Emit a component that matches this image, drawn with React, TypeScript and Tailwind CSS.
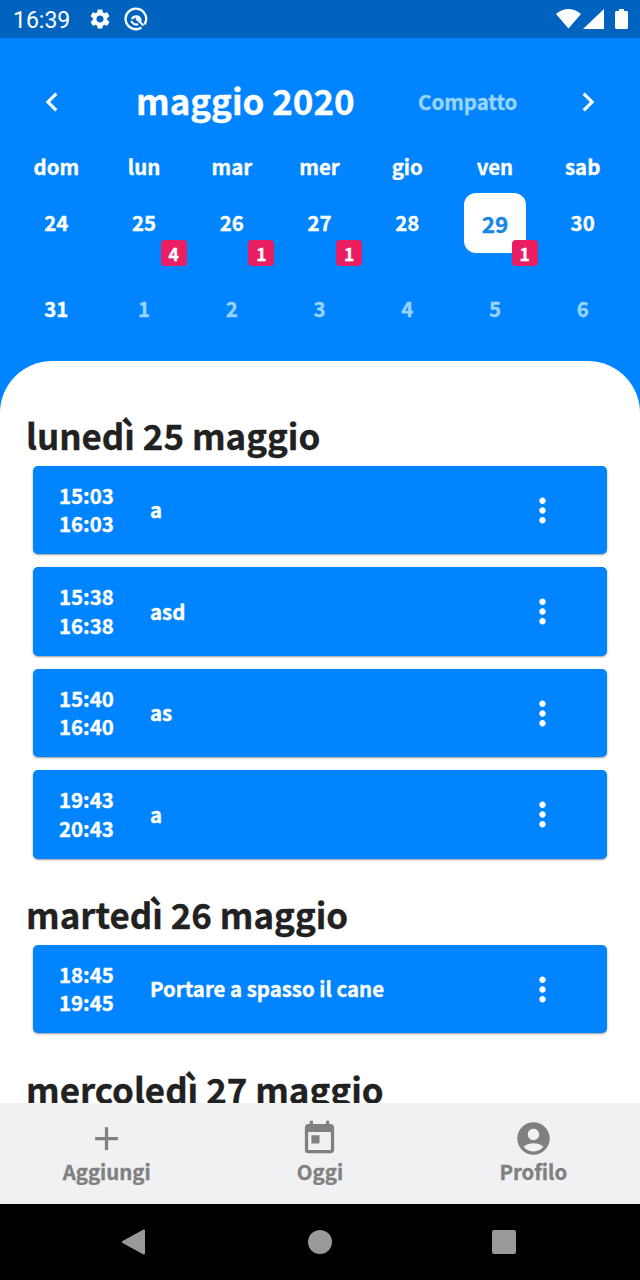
import React from "react";
import { MdSettings, MdAccountCircle, MdMoreVert, MdAdd, MdToday, MdChevronLeft, MdChevronRight } from "react-icons/md";

type Day = { n: number; badge?: number; selected?: boolean; muted?: boolean };
type Item = { start: string; end: string; title: string };

const weekdays = ["dom", "lun", "mar", "mer", "gio", "ven", "sab"];
const weeks: Day[][] = [
  [{ n: 24 }, { n: 25, badge: 4 }, { n: 26, badge: 1 }, { n: 27, badge: 1 }, { n: 28 }, { n: 29, badge: 1, selected: true }, { n: 30 }],
  [{ n: 31 }, { n: 1, muted: true }, { n: 2, muted: true }, { n: 3, muted: true }, { n: 4, muted: true }, { n: 5, muted: true }, { n: 6, muted: true }],
];
const monday: Item[] = [
  { start: "15:03", end: "16:03", title: "a" },
  { start: "15:38", end: "16:38", title: "asd" },
  { start: "15:40", end: "16:40", title: "as" },
  { start: "19:43", end: "20:43", title: "a" },
];
const tuesday: Item[] = [{ start: "18:45", end: "19:45", title: "Portare a spasso il cane" }];

function StatusBar() {
  return (
    <header className="flex h-[38px] shrink-0 items-center bg-[#0064bf] pl-[13px] pr-[12px] text-white [-webkit-text-stroke:0]">
      <span className="w-[75px] pt-[2px] font-['Roboto',sans-serif] text-[23px] font-normal leading-none">16:39</span>
      <MdSettings size={24} />
      <svg className="ml-[12px]" width="24" height="24" viewBox="0 0 24 24" fill="none" stroke="currentColor">
        <path d="M17.500 20.500A10.300 10.300 0 1 1 20.500 17.500" strokeWidth="2.300" />
        <path d="M6.800 12.500a5.500 5.500 0 0 1 10.700 0v3L12 10.500 9 12z" fill="currentColor" stroke="none" />
        <path d="M12 11.500l7.500 7M7.200 14q2.500 4.500 7 3.200" strokeWidth="2" />
      </svg>
      <svg className="ml-auto" width="25" height="20" viewBox="0 0 25 20" fill="currentColor"><path d="M0 5Q12.500-5 25 5L12.500 19.500z" /></svg>
      <svg className="ml-[2px]" width="21" height="20" viewBox="0 0 21 20" fill="currentColor"><path d="M21 0v20H0z" /></svg>
      <svg className="ml-[11px]" width="13" height="20" viewBox="0 0 13 20" fill="currentColor"><path d="M4 0h5v2h3l1 1v16l-1 1H1l-1-1V3l1-1h3z" /></svg>
    </header>
  );
}

function DayCell({ day }: { day: Day }) {
  return (
    <div className="relative flex h-[60px] justify-center">
      <div className={day.selected ? "flex w-[62px] items-center justify-center rounded-[12px] bg-white pt-[1px] text-[22.5px] text-[#1687e8]" : day.muted ? "flex items-center pb-[1px] text-[#99d4ff]" : "flex items-center pb-[1px]"}>
        {day.n}
      </div>
      {day.badge && (
        <span className="absolute left-[60.500px] top-[47px] flex h-[26px] w-[26px] items-center justify-center rounded-[4px] bg-[#e91e63] pt-[1px] text-[17.500px] leading-none">{day.badge}</span>
      )}
    </div>
  );
}

function Events({ title, items }: { title: string; items: Item[] }) {
  return (
    <section>
      <h2 className="mb-[5.500px] h-[50px] pl-[26px] text-[34.900px] leading-[50px] text-[#212121]">{title}</h2>
      <div className="flex flex-col gap-[13px] px-[33px]">
        {items.map((e) => (
          <article key={e.start} className="flex h-[88.500px] items-center rounded-[5px] bg-[#0084ff] pl-[26px] text-[20.400px] leading-[28.500px] text-white shadow-[0_1px_2px_rgba(0,0,0,0.4)]">
            <div className="w-[91px] pb-px">
              <div>{e.start}</div>
              <div>{e.end}</div>
            </div>
            <div className="flex-1 pb-px">{e.title}</div>
            <MdMoreVert className="mr-[45.500px] mt-px" size={39} />
          </article>
        ))}
      </div>
    </section>
  );
}

export default function App() {
  return (
    <div className="flex h-[1280px] w-[640px] flex-col overflow-hidden bg-[#0084ff] font-['Noto_Sans_CJK_SC',sans-serif] font-bold [-webkit-text-stroke:0.35px]">
      <StatusBar />
      <div className="h-[323px] shrink-0 text-[20.400px] leading-none text-white">
        <div className="flex h-[127px] items-center px-[33px]">
          <MdChevronLeft size={38} />
          <h1 className="ml-[65px] w-[282px] pb-[2px] text-[34.900px] leading-none">maggio 2020</h1>
          <span className="pb-[1px] text-[#99d4ff]">Compatto</span>
          <MdChevronRight className="ml-auto" size={38} />
        </div>
        <div className="-mt-[9px] grid h-[25px] grid-cols-7 pl-[12.500px] pr-[13.500px] text-center">
          {weekdays.map((d) => <span key={d}>{d}</span>)}
        </div>
        <div className="mt-[12px] flex flex-col gap-[26px]">
          {weeks.map((w, i) => (
            <div key={i} className="grid grid-cols-7 pl-[12.500px] pr-[13.500px]">{w.map((d) => <DayCell key={d.n} day={d} />)}</div>
          ))}
        </div>
      </div>
      <main className="min-h-0 flex-1 overflow-hidden rounded-t-[52px] bg-white pt-[49px]">
        <Events title="lunedì 25 maggio" items={monday} />
        <div className="h-[30.500px]" />
        <Events title="martedì 26 maggio" items={tuesday} />
        <div className="h-[31px]" />
        <Events title="mercoledì 27 maggio" items={[]} />
      </main>
      <nav className="grid h-[101px] shrink-0 grid-cols-3 bg-[#f0f1f3] pt-[16px] text-[20.400px] leading-[26px] text-[#808080]">
        <div className="flex flex-col items-center"><MdAdd size={39} />Aggiungi</div>
        <div className="flex flex-col items-center"><MdToday size={39} />Oggi</div>
        <div className="flex flex-col items-center"><MdAccountCircle size={39} />Profilo</div>
      </nav>
      <footer className="flex h-[76px] shrink-0 items-center bg-black pl-[121px] text-[#999999]">
        <svg width="24" height="28" viewBox="0 0 24 28" fill="currentColor" stroke="currentColor" strokeWidth="2" strokeLinejoin="round"><path d="M23 2.500v23L2 14z" /></svg>
        <div className="ml-[163px] size-6 rounded-full bg-[#999999]" />
        <div className="ml-[160px] size-6 rounded-[2px] bg-[#999999]" />
      </footer>
    </div>
  );
}
